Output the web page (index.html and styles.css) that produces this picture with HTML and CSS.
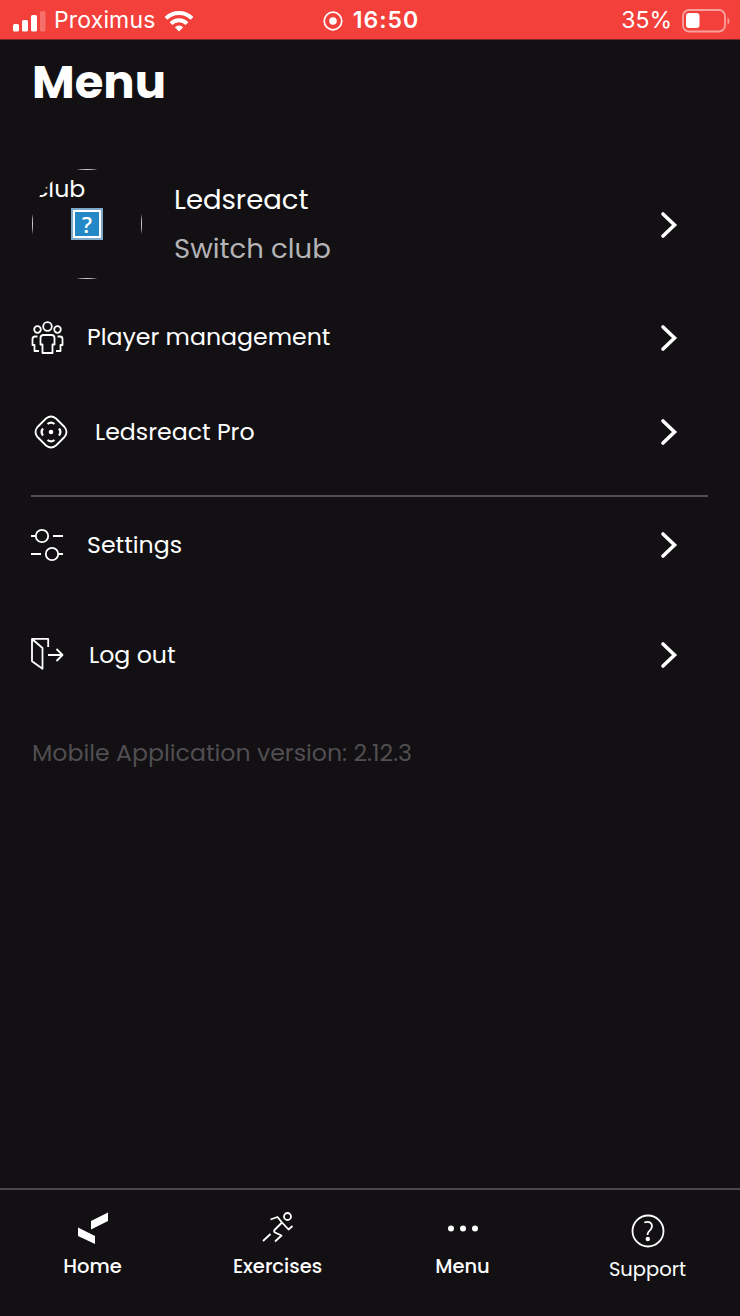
FILE: index.html
```
<!DOCTYPE html>
<html lang="en">
<head>
    <meta charset="UTF-8">
    <meta name="viewport" content="width=device-width, initial-scale=1.0, viewport-fit=cover">
    <title>Menu</title>
    <link rel="stylesheet" href="styles.css">
</head>
<body>
    <div class="status-bar">
        <div class="status-left">
            <svg class="signal" width="33" height="22" viewBox="0 0 33 22" fill="#fff">
                <rect x="0" y="14" width="6" height="7.500" rx="1.5"/>
                <rect x="9" y="10" width="6" height="11.500" rx="1.5"/>
                <rect x="18" y="5" width="6" height="16.500" rx="1.5"/>
                <rect x="27" y="1" width="5.500" height="20.500" rx="1.5" opacity=".25"/>
            </svg>
            <span class="carrier">Proximus</span>
            <svg width="30" height="22" viewBox="0 0 30 22" fill="none" stroke="#fff" stroke-width="4">
                <path d="M2 8.300a18.500 18.500 0 0 1 26 0"/>
                <path d="M7 13.600a11.400 11.400 0 0 1 16 0"/>
                <path d="M15 21.500l-4.200-4.200a6 6 0 0 1 8.400 0z" fill="#fff" stroke="none"/>
            </svg>
        </div>
        <div class="status-center">
            <svg width="20" height="20" viewBox="0 0 20 20">
                <circle cx="10" cy="10" r="8.800" fill="none" stroke="#fff" stroke-width="1.700"/>
                <circle cx="10" cy="10" r="3.800" fill="#fff"/>
            </svg>
            <span class="clock">16:50</span>
        </div>
        <div class="status-right">
            <span class="percent">35%</span>
            <svg width="48" height="24" viewBox="0 0 48 24">
                <rect x="1" y="1" width="42" height="21.500" rx="6" fill="none" stroke="#fff" stroke-width="1.800" opacity=".5"/>
                <rect x="4" y="4" width="13.500" height="15" rx="3" fill="#fff"/>
                <path d="M45.500 8.500c2.400 1 2.400 6 0 7z" fill="#fff" opacity=".5"/>
            </svg>
        </div>
    </div>

    <main class="content">
        <h1>Menu</h1>

        <a class="row row-club">
            <div class="avatar">
                <div class="avatar-image">
                    <span class="avatar-alt">club</span>
                    <span class="avatar-missing">?</span>
                </div>
            </div>
            <div class="club">
                <span class="club-name">Ledsreact</span>
                <span class="club-switch">Switch club</span>
            </div>
            <svg class="chevron" width="18" height="30" viewBox="0 0 18 30"><path d="M3 5l11.500 11L3 27"/></svg>
        </a>

        <a class="row row-players">
            <svg class="icon" width="34" height="34" viewBox="0 0 34 34">
                <circle cx="16.500" cy="5.500" r="4.300"/>
                <circle cx="6.500" cy="8.500" r="3.300"/>
                <circle cx="26.500" cy="8.500" r="3.300"/>
                <path d="M11.500 32V23.500H9.500V17q0-3 3-3h8q3 0 3 3v6.500h-2V32z"/>
                <path d="M6.500 15.500h-2.500q-2.500 0-2.500 2.500v6h2v6h4.500M26.500 15.500H29q2.500 0 2.500 2.500v6h-2v6H25"/>
            </svg>
            <span class="label">Player management</span>
            <svg class="chevron" width="18" height="30" viewBox="0 0 18 30"><path d="M3 4l11.500 11L3 26"/></svg>
        </a>

        <a class="row row-pro">
            <svg class="icon" width="34" height="34" viewBox="0 0 34 34">
                <path d="M12 3.500q5-4 10 0l8.500 8.500q4 5 0 10L22 30.500q-5 4-10 0L3.500 22q-4-5 0-10z"/>
                <circle cx="17" cy="17" r="1.400" class="solid"/>
                <path class="marks" d="M13.500 9q3.500-2.800 7 0M13.500 25q3.500 2.800 7 0M9 13.500q-2.800 3.500 0 7M25 13.500q2.800 3.500 0 7"/>
            </svg>
            <span class="label label-pro">Ledsreact Pro</span>
            <svg class="chevron" width="18" height="30" viewBox="0 0 18 30"><path d="M3 4l11.500 11L3 26"/></svg>
        </a>

        <hr>

        <a class="row row-settings">
            <svg class="icon" width="34" height="34" viewBox="0 0 34 34">
                <circle cx="11" cy="8" r="6.200"/>
                <circle cx="21" cy="26" r="6.200"/>
                <path d="M0 8h4.800M22 8h10M0 26h10M27.200 26H32"/>
            </svg>
            <span class="label">Settings</span>
            <svg class="chevron" width="18" height="30" viewBox="0 0 18 30"><path d="M3 4l11.500 11L3 26"/></svg>
        </a>

        <a class="row row-logout">
            <svg class="icon" width="34" height="34" viewBox="0 0 34 34">
                <path d="M17.200 9V0.900H1v22.300l10.500 7.500V10L1 1"/>
                <path d="M17 17h14.500M25.500 11l6 6-6 6"/>
            </svg>
            <span class="label label-logout">Log out</span>
            <svg class="chevron" width="18" height="30" viewBox="0 0 18 30"><path d="M3 4l11.500 11L3 26"/></svg>
        </a>

        <p class="version">Mobile Application version: 2.12.3</p>
    </main>

    <nav class="tabs">
        <a class="tab">
            <svg width="32" height="34" viewBox="0 0 32 34" fill="#fff">
                <path d="M14 10L31 1.500v8.500L14 18.500zM1 16.500l17 8.500v8L1 25z"/>
            </svg>
            <span>Home</span>
        </a>
        <a class="tab">
            <svg class="runner" width="32" height="34" viewBox="0 0 32 34">
                <circle cx="25.500" cy="5.500" r="3.500"/>
                <path d="M8.500 8.500l7-2.500L20 11.500l6.500 7L30.500 15M20 11.500L12.500 19q-1 1.500 0.500 2.500l6.500 3L13 30.500M8.500 23L1 30"/>
            </svg>
            <span>Exercises</span>
        </a>
        <a class="tab">
            <svg width="32" height="34" viewBox="0 0 32 34" fill="#fff">
                <circle cx="4" cy="17.500" r="3"/>
                <circle cx="16" cy="17.500" r="3"/>
                <circle cx="28" cy="17.500" r="3"/>
            </svg>
            <span>Menu</span>
        </a>
        <a class="tab tab-last">
            <svg class="help" width="34" height="34" viewBox="0 0 34 34">
                <circle cx="17" cy="17" r="15.500"/>
                <path d="M13.300 8.500q3.700-1.500 6.200 0.300 2.700 2.400 0.500 6.200L17.500 18q-1 1.300-1 3"/>
                <circle cx="16.800" cy="25" r="1.300" class="solid"/>
            </svg>
            <span>Support</span>
        </a>
    </nav>
</body>
</html>
```
FILE: styles.css
```
* {
    box-sizing: border-box;
}
body {
    font-family: Poppins, Inter, sans-serif;
    margin: 0;
    background-color: #121013;
    color: #fff;
    height: 1316px;
    display: flex;
    flex-direction: column;
    overflow: hidden;
}
.status-bar {
    display: grid;
    grid-template-columns: 1fr 1fr 1fr;
    height: 40px;
    padding: 0 10px 0 13px;
    background-color: #f3403a;
    border-bottom: 1px solid #7c292a;
    font-family: Inter, sans-serif;
    line-height: 41px;
}
.status-left, .status-center, .status-right {
    display: flex;
    align-items: center;
}
.status-center {
    justify-content: center;
    gap: 10px;
    padding-right: 1px;
}
.status-right {
    justify-content: flex-end;
    gap: 10px;
}
.carrier {
    margin: 0 9px 0 8px;
    font-size: 23px;
    letter-spacing: 0.15px;
}
.clock {
    font-size: 23px;
    font-weight: 600;
    letter-spacing: 1px;
}
.percent {
    font-size: 23px;
}
.content {
    flex: 1;
    padding: 0 32px 0 31px;
}
h1 {
    margin: 0;
    height: 129px;
    padding: 14px 0 0 1px;
    font-size: 46.500px;
    font-weight: 700;
    line-height: 56px;
}
.row {
    display: flex;
    align-items: center;
}
.row-club {
    height: 110px;
    padding-left: 1px;
}
.row-players {
    height: 117px;
}
.row-pro {
    height: 72px;
    padding-left: 3px;
}
.row-settings {
    height: 96px;
}
.row-logout {
    height: 124px;
}
.icon, .runner, .help {
    fill: none;
    stroke: #fff;
    stroke-width: 1.8;
    stroke-linejoin: round;
}
.icon {
    flex: none;
}
.solid {
    fill: #fff;
}
.marks {
    stroke-width: 2.2;
}
.chevron {
    flex: none;
    margin-left: auto;
    margin-right: 30px;
    fill: none;
    stroke: #fff;
    stroke-width: 3.6;
    stroke-linecap: round;
    stroke-linejoin: miter;
}
.label {
    margin-left: 22px;
    padding-bottom: 2px;
    font-size: 23.65px;
}
.label-pro {
    margin-left: 27px;
    padding-bottom: 1px;
}
.label-logout {
    margin-left: 24px;
    padding-bottom: 1px;
}
/* square placeholder clipped by the round avatar */
.avatar {
    width: 110px;
    height: 110px;
    border-radius: 50%;
    overflow: hidden;
}
.avatar-image {
    height: 110px;
    border: 1px solid #c8c8c8;
    display: flex;
    flex-direction: column;
    align-items: center;
}
.avatar-alt {
    align-self: flex-start;
    margin-left: 1px;
    height: 38px;
    font-size: 23.65px;
    line-height: 37px;
}
.avatar-missing {
    width: 32px;
    height: 32px;
    border: 2px solid #7fa9c9;
    outline: 2px solid #fff;
    outline-offset: -4px;
    background-color: #2588c6;
    font-family: "Open Sans", sans-serif;
    font-size: 22px;
    font-weight: 600;
    line-height: 28px;
    text-align: center;
}
.club {
    display: flex;
    flex-direction: column;
    margin-left: 32px;
    font-size: 27.5px;
    line-height: 49px;
}
.club-switch {
    color: #b4b3b5;
}
hr {
    height: 2px;
    margin: 27px 0 0;
    border: none;
    background-color: #504f52;
}
.version {
    margin: 0;
    padding-left: 1px;
    color: #504e51;
    font-size: 23.65px;
    line-height: 72px;
}
.tabs {
    display: grid;
    grid-template-columns: repeat(4, 1fr);
    height: 128px;
    border-top: 2px solid #49484b;
}
.tab {
    display: flex;
    flex-direction: column;
    align-items: center;
    padding-top: 21px;
    font-size: 19.5px;
    font-weight: 500;
    line-height: 24px;
}
.tab span {
    margin-top: 10px;
}
.tab-last {
    padding-top: 24px;
    font-weight: 400;
}
```
